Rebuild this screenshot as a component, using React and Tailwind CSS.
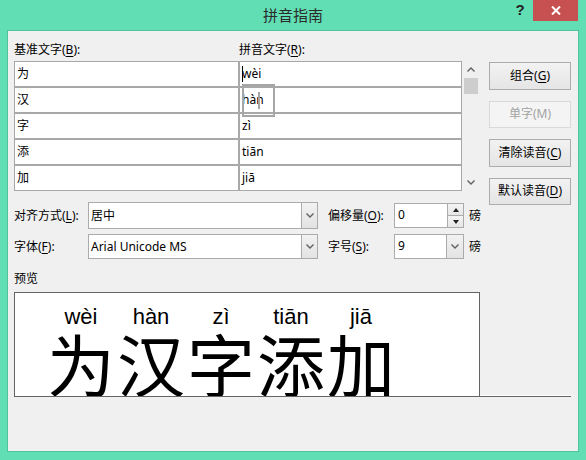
import React from "react";

function Chevron({ up = false, className = "" }) {
  return (
    <svg width="8" height="5" viewBox="0 0 8 5" className={className}>
      <path
        d={up ? "M0.5 4.5 L4 1 L7.5 4.5" : "M0.5 0.5 L4 4 L7.5 0.5"}
        fill="none"
        stroke="#606060"
        strokeWidth="1.4"
      />
    </svg>
  );
}

function Btn({ children, disabled = false }) {
  return (
    <div
      className={
        "h-[27.5px] w-[82px] flex items-center justify-center border " +
        (disabled
          ? "border-[#D9D9D9] bg-[#F4F4F4] text-[#A3A3A3]"
          : "border-[#ACACAC] bg-gradient-to-b from-[#F2F2F2] to-[#E5E5E5] text-black")
      }
    >
      {children}
    </div>
  );
}

function Combo({ width, btnWidth, height, value }) {
  return (
    <div
      className={`flex border border-[#ABABAB] bg-white ${width} ${height}`}
    >
      <div className="flex-1 flex items-center pl-[2px]">{value}</div>
      <div
        className={`${btnWidth} flex items-center justify-center border-l border-[#ABABAB] bg-gradient-to-b from-[#F2F2F2] to-[#E3E3E3]`}
      >
        <Chevron />
      </div>
    </div>
  );
}

export default function App() {
  const rows = [
    ["为", "wèi"],
    ["汉", "hàn"],
    ["字", "zì"],
    ["添", "tiān"],
    ["加", "jiā"],
  ];
  const preview = rows;
  return (
    <div className="w-[586px] h-[460px] bg-[#62DEB4] flex flex-col overflow-hidden font-['Noto_Sans','Noto_Sans_CJK_SC',sans-serif] text-[12px] text-black">
      {/* title bar */}
      <div className="h-[30px] grid grid-cols-[1fr_auto_1fr]">
        <div />
        <div className="text-[15px] leading-[30px] text-[#2A2A2A] font-['Noto_Sans_CJK_SC',sans-serif]">
          拼音指南
        </div>
        <div className="flex justify-end items-start pr-[8px]">
          <div className="w-[26px] h-[21px] flex items-center justify-center text-[15px] font-bold text-[#222] font-['Liberation_Sans',sans-serif]">
            ?
          </div>
          <div className="w-[45px] h-[21px] bg-[#C75050] flex items-center justify-center">
            <svg width="10" height="9" viewBox="0 0 10 9">
              <path d="M1 0.5 L9 8.5 M9 0.5 L1 8.5" stroke="#fff" strokeWidth="2" />
            </svg>
          </div>
        </div>
      </div>

      {/* client */}
      <div className="mx-[7px] mb-[8px] flex-1 border border-[#4FC39B] bg-[#F0F0F0] pl-[6px] pt-[11px] flex flex-col">
        <div className="flex items-start">
          {/* left column */}
          <div className="flex flex-col">
            <div className="flex h-[16px] leading-[16px]">
              <div className="w-[225px]">
                基准文字(<u className="underline-offset-2">B</u>):
              </div>
              <div>
                拼音文字(<u className="underline-offset-2">R</u>):
              </div>
            </div>
            <div className="mt-[3px] flex">
              <div className="relative grid grid-cols-[225px_223px]">
                {rows.map(([c, p], i) => (
                  <React.Fragment key={i}>
                    <div className="h-[26px] border border-[#A8A8A8] bg-white flex items-center pl-[2px]">
                      {c}
                    </div>
                    <div className="h-[26px] border border-[#A8A8A8] bg-white flex items-center pl-[2px]">
                      {i === 0 && (
                        <span className="inline-block w-px h-[16px] bg-black mr-[-1px]" />
                      )}
                      {p}
                    </div>
                  </React.Fragment>
                ))}
                {/* IME drag box overlay */}
                <div className="absolute left-[228px] top-[23px] w-[33px] h-[33px] border-2 border-[#A6A6A6] flex items-center justify-center">
                  <div className="w-[2px] h-[17px] bg-[#A6A6A6]" />
                </div>
              </div>
              {/* scrollbar */}
              <div className="w-[17px] h-[130px] flex flex-col items-center">
                <div className="h-[17px] flex items-center justify-center">
                  <Chevron up />
                </div>
                <div className="w-[14px] h-[16px] bg-[#CDCDCD]" />
                <div className="flex-1" />
                <div className="h-[17px] flex items-center justify-center">
                  <Chevron />
                </div>
              </div>
            </div>
          </div>
          {/* buttons */}
          <div className="ml-[10px] mt-[20px] mb-[-16px] flex flex-col gap-[11px]">
            <Btn>
              组合(<u className="underline-offset-2">G</u>)
            </Btn>
            <Btn disabled>单字(M)</Btn>
            <Btn>
              清除读音(<u className="underline-offset-2">C</u>)
            </Btn>
            <Btn>
              默认读音(<u className="underline-offset-2">D</u>)
            </Btn>
          </div>
        </div>

        {/* combos */}
        <div className="mt-[11px] flex items-center h-[27px]">
          <div className="w-[74px]">
            对齐方式(<u className="underline-offset-2">L</u>):
          </div>
          <Combo width="w-[230px]" btnWidth="w-[16px]" height="h-[27px]" value="居中" />
          <div className="ml-[10px] w-[66px]">
            偏移量(<u className="underline-offset-2">O</u>):
          </div>
          <div className="w-[70px] h-[25px] flex border border-[#ABABAB] bg-white">
            <div className="flex-1 pl-[3px] pt-[2px]">0</div>
            <div className="w-[16px] flex flex-col border-l border-[#ABABAB]">
              <div className="flex-1 flex items-center justify-center bg-gradient-to-b from-[#F4F4F4] to-[#E6E6E6] border-b border-[#ABABAB]">
                <svg width="6" height="4" viewBox="0 0 6 4">
                  <path d="M0 4 L3 0 L6 4 Z" fill="#222" />
                </svg>
              </div>
              <div className="flex-1 flex items-center justify-center bg-gradient-to-b from-[#F4F4F4] to-[#E6E6E6]">
                <svg width="6" height="4" viewBox="0 0 6 4">
                  <path d="M0 0 L3 4 L6 0 Z" fill="#222" />
                </svg>
              </div>
            </div>
          </div>
          <div className="ml-[5px]">磅</div>
        </div>
        <div className="mt-[5px] flex items-center h-[25px]">
          <div className="w-[74px]">
            字体(<u className="underline-offset-2">F</u>):
          </div>
          <Combo width="w-[230px]" btnWidth="w-[16px]" height="h-[25px]" value="Arial Unicode MS" />
          <div className="ml-[10px] w-[66px]">
            字号(<u className="underline-offset-2">S</u>):
          </div>
          <div className="w-[70px] h-[25px] flex border border-[#ABABAB] bg-white">
            <div className="flex-1 pl-[3px] pt-[2px]">9</div>
            <div className="w-[17px] flex items-center justify-center border-l border-[#ABABAB] bg-gradient-to-b from-[#F2F2F2] to-[#E3E3E3]">
              <Chevron />
            </div>
          </div>
          <div className="ml-[5px]">磅</div>
        </div>

        {/* preview */}
        <div className="mt-[12px] h-[16px] leading-[16px]">预览</div>
        <div className="mt-[5px] w-[557px] flex items-end border-b border-[#646464]">
          <div className="w-[466px] h-[104px] border-l border-t border-r border-[#646464] bg-white overflow-hidden pl-[31px]">
            <div className="flex">
              {preview.map(([c, p], i) => (
                <div key={i} className="w-[70px] flex flex-col items-center">
                  <div className="mt-[12px] h-[24px] leading-[24px] text-[22px] font-['Liberation_Sans',Arial,sans-serif]">
                    {p}
                  </div>
                  <div className="text-[68px] leading-[68px] font-['Noto_Sans_CJK_SC',sans-serif]">
                    {c}
                  </div>
                </div>
              ))}
            </div>
          </div>
          <div className="flex-1 h-px bg-white" />
        </div>
      </div>
    </div>
  );
}
